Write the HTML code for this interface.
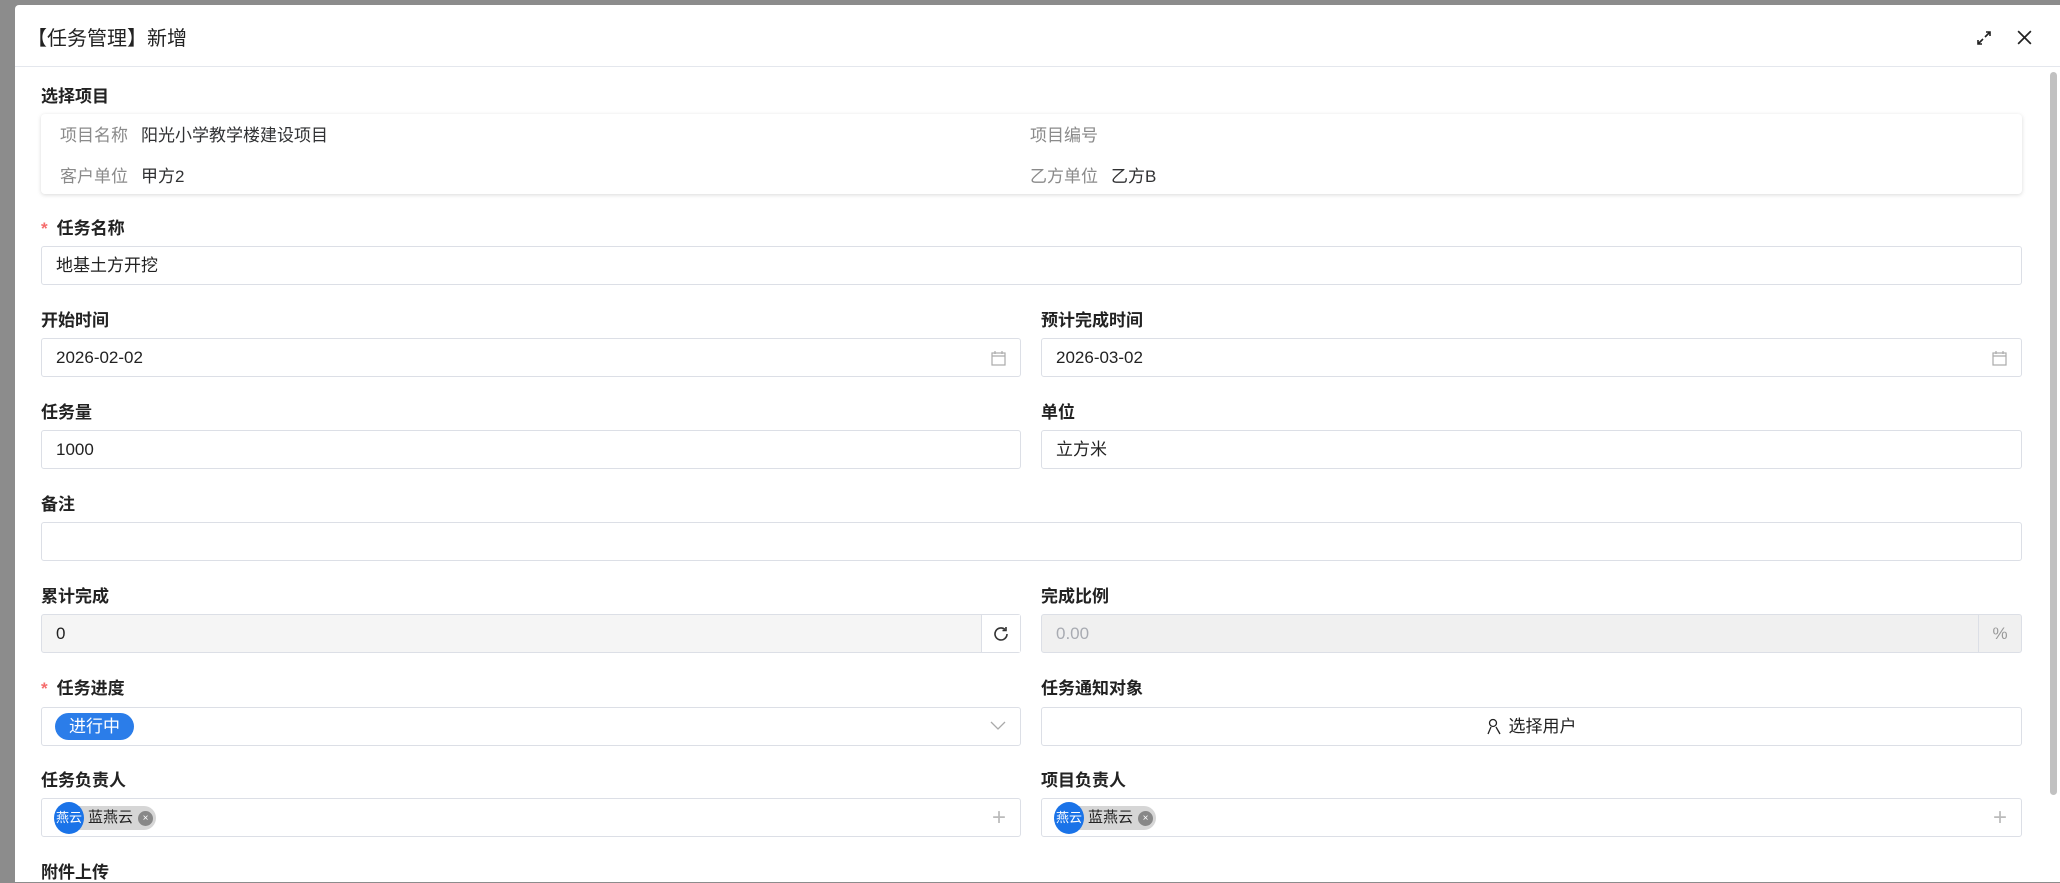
<!DOCTYPE html>
<html><head><meta charset="utf-8"><style>
*{box-sizing:border-box;margin:0;padding:0}
body{width:2060px;height:882px;overflow:hidden;background:#8c8c8c;font-family:"Liberation Sans","Noto Sans CJK SC",sans-serif;position:relative;color:#303133}
.modal{position:absolute;left:15px;top:5px;width:2045px;height:877px;background:#fff;border-radius:4px 0 0 0}
.hdr{position:absolute;left:0;top:0;right:0;height:62px;border-bottom:1px solid #e4e7ed}
.title{position:absolute;left:12px;top:17px;font-size:20px;color:#222}
.lbl{position:absolute;font-size:17px;font-weight:bold;color:#222;margin-top:-3px}
.req::before{content:"*";color:#f56c6c;margin-right:9px}
.inp{position:absolute;height:39px;border:1px solid #dcdfe6;border-radius:3px;background:#fff;font-size:17px;line-height:37px;padding-left:14px;color:#222}
.dis{background:#f5f5f5;color:#222}
.dis2{background:#f0f0f0;color:#a8abb2}
.card{position:absolute;left:26px;top:109px;width:1981px;height:80px;border-radius:4px;box-shadow:0 1px 4px rgba(0,0,0,.15);font-size:17px}
.card span{position:absolute}
.g{color:#8a8a8a}
.ic{position:absolute;color:#999}
.chip{position:absolute;top:5px;left:12px;height:28px}
</style></head><body>
<div class="modal">
<div class="hdr"><div class="title">【任务管理】新增</div>
<svg style="position:absolute;left:1961px;top:25px" width="16" height="16" viewBox="0 0 16 16" stroke="#222" stroke-width="1.6" fill="none"><path d="M9 7l5-5M10 2h4v4M7 9l-5 5M2 10v4h4"/></svg>
<svg style="position:absolute;left:2001px;top:24px" width="17" height="17" viewBox="0 0 16 16" stroke="#222" stroke-width="1.6"><path d="M2 2l12 12M14 2L2 14"/></svg>
</div>
<div style="position:absolute;right:3px;top:67px;width:7px;height:723px;background:#c1c1c1;border-radius:4px"></div>
<div class="lbl" style="left:26px;top:80px">选择项目</div>
<div class="card">
<span class="g" style="left:19px;top:7px">项目名称</span><span style="left:100px;top:7px">阳光小学教学楼建设项目</span>
<span class="g" style="left:989px;top:7px">项目编号</span>
<span class="g" style="left:19px;top:48px">客户单位</span><span style="left:100px;top:48px">甲方2</span>
<span class="g" style="left:989px;top:48px">乙方单位</span><span style="left:1070px;top:48px">乙方B</span>
</div>
<div class="lbl req" style="left:26px;top:212px">任务名称</div>
<div class="inp" style="left:26px;top:241px;width:1981px">地基土方开挖</div>
<div class="lbl" style="left:26px;top:304px">开始时间</div>
<div class="inp" style="left:26px;top:333px;width:980px">2026-02-02<svg class="ic" style="right:14px;top:11px" width="15" height="16" viewBox="0 0 15 16" fill="none" stroke="#aaa" stroke-width="1.2"><rect x="1" y="3" width="13" height="12"/><path d="M1 6h13M4 1v3M11 1v3"/></svg></div>
<div class="lbl" style="left:1026px;top:304px">预计完成时间</div>
<div class="inp" style="left:1026px;top:333px;width:981px">2026-03-02<svg class="ic" style="right:14px;top:11px" width="15" height="16" viewBox="0 0 15 16" fill="none" stroke="#aaa" stroke-width="1.2"><rect x="1" y="3" width="13" height="12"/><path d="M1 6h13M4 1v3M11 1v3"/></svg></div>
<div class="lbl" style="left:26px;top:396px">任务量</div>
<div class="inp" style="left:26px;top:425px;width:980px">1000</div>
<div class="lbl" style="left:1026px;top:396px">单位</div>
<div class="inp" style="left:1026px;top:425px;width:981px">立方米</div>
<div class="lbl" style="left:26px;top:488px">备注</div>
<div class="inp" style="left:26px;top:517px;width:1981px"></div>
<div class="lbl" style="left:26px;top:580px">累计完成</div>
<div class="inp dis" style="left:26px;top:609px;width:980px">0<div style="position:absolute;right:0;top:0;width:39px;height:37px;background:#fff;border-left:1px solid #dcdfe6"><svg style="position:absolute;left:10px;top:10px" width="18" height="18" viewBox="0 0 18 18" fill="none" stroke="#333" stroke-width="1.6"><path d="M15 9a6 6 0 1 1-2-4.5"/><path d="M14 2v3.5h-3.5"/></svg></div></div>
<div class="lbl" style="left:1026px;top:580px">完成比例</div>
<div class="inp dis2" style="left:1026px;top:609px;width:981px">0.00<div style="position:absolute;right:0;top:0;width:43px;height:37px;border-left:1px solid #dcdfe6;text-align:center;color:#999">%</div></div>
<div class="lbl req" style="left:26px;top:672px">任务进度</div>
<div class="inp" style="left:26px;top:702px;width:980px"><span style="position:absolute;left:13px;top:5px;height:27px;line-height:27px;padding:0 14px;background:#2b7de9;color:#fff;border-radius:14px;font-size:17px">进行中</span><svg style="position:absolute;right:14px;top:13px" width="16" height="10" viewBox="0 0 16 10" fill="none" stroke="#aaa" stroke-width="1.3"><path d="M1 1l7 7 7-7"/></svg></div>
<div class="lbl" style="left:1026px;top:672px">任务通知对象</div>
<div class="inp" style="left:1026px;top:702px;width:981px;text-align:center;padding:0"><svg style="vertical-align:-3px;margin-right:8px" width="14" height="17" viewBox="0 0 14 17" fill="none" stroke="#222" stroke-width="1.3"><circle cx="6" cy="5" r="3.5"/><path d="M1 16l3-7M13 16l-4-7"/></svg>选择用户</div>
<div class="lbl" style="left:26px;top:764px">任务负责人</div>
<div class="inp" style="left:26px;top:793px;width:980px"><div class="chip"><span style="position:absolute;left:10px;top:2px;width:92px;height:24px;background:#d6d6d6;border-radius:12px"></span><span style="position:absolute;left:0;top:-2px;width:30px;height:32px;border-radius:50%;background:#1a73e8;color:#fff;font-size:13px;line-height:32px;text-align:center">燕云</span><span style="position:absolute;left:34px;top:0;font-size:15px;line-height:28px;white-space:nowrap">蓝燕云</span><span style="position:absolute;left:84px;top:7px;width:15px;height:15px;border-radius:50%;background:#888;color:#fff;font-size:10px;line-height:15px;text-align:center">×</span></div><span style="position:absolute;right:14px;top:0;color:#bbb;font-size:24px;line-height:37px">+</span></div>
<div class="lbl" style="left:1026px;top:764px">项目负责人</div>
<div class="inp" style="left:1026px;top:793px;width:981px"><div class="chip"><span style="position:absolute;left:10px;top:2px;width:92px;height:24px;background:#d6d6d6;border-radius:12px"></span><span style="position:absolute;left:0;top:-2px;width:30px;height:32px;border-radius:50%;background:#1a73e8;color:#fff;font-size:13px;line-height:32px;text-align:center">燕云</span><span style="position:absolute;left:34px;top:0;font-size:15px;line-height:28px;white-space:nowrap">蓝燕云</span><span style="position:absolute;left:84px;top:7px;width:15px;height:15px;border-radius:50%;background:#888;color:#fff;font-size:10px;line-height:15px;text-align:center">×</span></div><span style="position:absolute;right:14px;top:0;color:#bbb;font-size:24px;line-height:37px">+</span></div>
<div class="lbl" style="left:26px;top:856px">附件上传</div>
</div>
</body></html>
